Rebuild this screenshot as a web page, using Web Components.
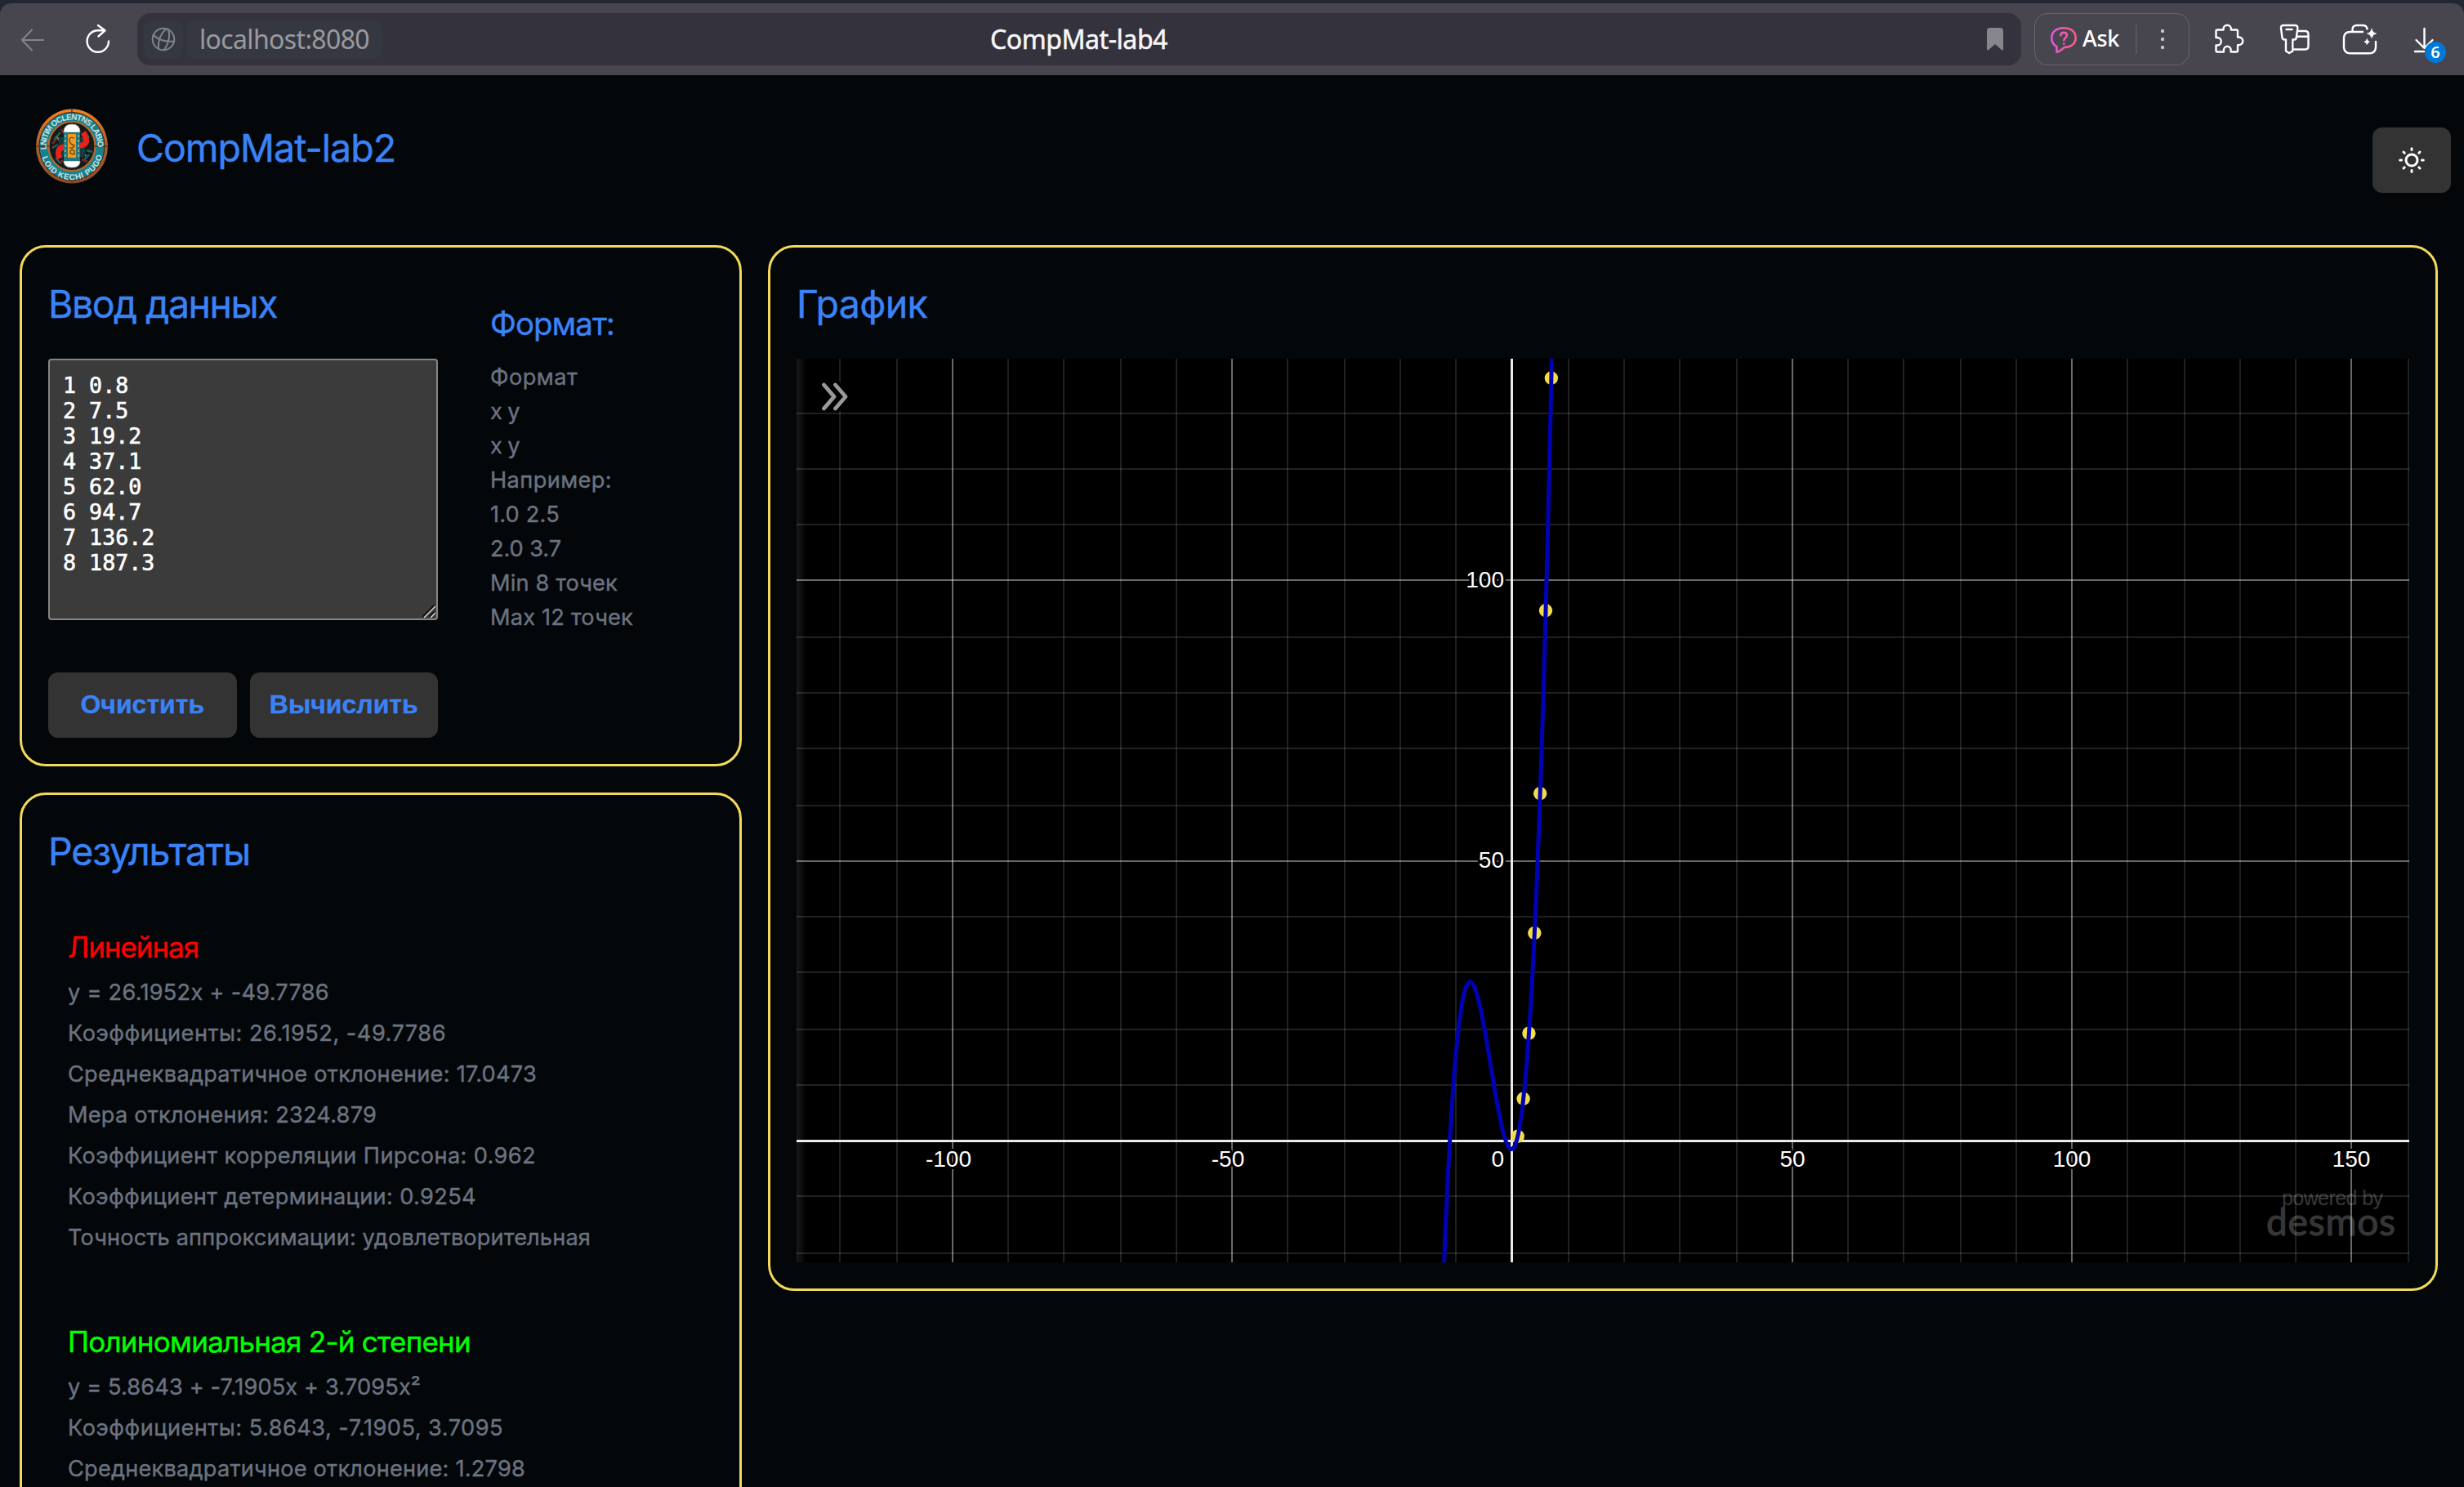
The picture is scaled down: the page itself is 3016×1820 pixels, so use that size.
<!DOCTYPE html>
<html lang="ru">
<head>
<meta charset="utf-8">
<title>CompMat-lab4</title>
<style>
html,body{margin:0;height:100%;overflow:hidden;background:#030709}
body{font-family:Inter,"Noto Sans",sans-serif;color:#6b7280}
</style>
</head>
<body>
<lab-app></lab-app>
<script>
function define(name, html, setup) {
  const tpl = document.createElement('template');
  tpl.innerHTML = html;
  customElements.define(name, class extends HTMLElement {
    constructor() { super(); this.attachShadow({ mode: 'open' }).append(tpl.content.cloneNode(true)); }
    connectedCallback() { if (setup) setup(this, this.shadowRoot); }
  });
}

/* single line of text tracked to a given advance width */
define('fit-text', `<style>:host{display:block;white-space:nowrap}span{display:inline-block}</style><span><slot></slot></span>`, (el, root) => {
  const span = root.querySelector('span');
  const w = +el.getAttribute('w'), n = el.textContent.length;
  if (w) span.style.letterSpacing = ((w - span.getBoundingClientRect().width) / n) + 'px';
});

define('ask-button', `<style>
:host{display:flex;box-sizing:border-box;width:190px;height:64px;border:1.5px solid #66656e;border-radius:16px;align-items:center;color:#fff;padding-left:18px}
svg{display:block;flex:none}
.t{font:500 27px/64px "Noto Sans",sans-serif;margin:-3px 0 0 6px;width:65px}
i{width:2px;height:36px;background:#57565f;margin-right:28px}
</style>
<svg width="34" height="36" viewBox="0 0 34 36" fill="none" stroke="url(#g)" stroke-width="2.6" stroke-linejoin="round" stroke-linecap="round">
<defs><linearGradient id="g" gradientUnits="userSpaceOnUse" x1="0" y1="18" x2="34" y2="18"><stop offset="0" stop-color="#df56e0"/><stop offset="1" stop-color="#ff5c80"/></linearGradient></defs>
<path d="M8.5 27.2C4.500 25 2.300 21 2.300 16.500C2.300 9 8 4.300 17 4.300S31.700 9 31.700 16.200S26 27.800 18.500 27.800C15.500 29.200 12.500 33.500 8.500 33.600Z"/>
<path d="M13.300 13.200C13.500 8.800 20.900 8.800 20.900 13.300C20.900 16.300 17.300 16.300 17.300 19.300M17.300 23.600v.2"/></svg>
<fit-text class="t" w="45">Ask</fit-text><i></i>
<svg width="6" height="28" fill="#c6c6ca"><circle cx="3" cy="4" r="2.200"/><circle cx="3" cy="14" r="2.200"/><circle cx="3" cy="24" r="2.200"/></svg>`);

define('browser-bar', `<style>
:host{display:block;height:92px;background:#232531;padding-top:4px;box-sizing:border-box}
.bar{display:flex;align-items:center;height:88px;background:#47464f;border-radius:14px 14px 0 0;padding-left:24px;box-sizing:border-box}
svg{display:block;flex:none;fill:none;stroke:#fff;stroke-width:2.400;stroke-linecap:round;stroke-linejoin:round}
.reload{margin-left:48px}
.url{margin-left:32px;width:2306px;height:64px;background:#34333d;border-radius:16px;display:flex;align-items:center;box-sizing:border-box;padding:0 22px 0 8px;font:32px/48px "Noto Sans",sans-serif}
.chip{height:48px;background:#363841;border-radius:12px;display:flex;align-items:center;justify-content:center}
.globe{width:48px}.host{width:240px;margin-left:4px;color:#9a9a9e}
.title{margin-left:744px;width:1220px;color:#f7f7f8;-webkit-text-stroke:.5px}
ask-button{margin-left:16px}
.puzzle{margin-left:30px}.key{margin-left:42px}.case{margin-left:36px}
.dl{position:relative;margin-left:43px}
.badge{position:absolute;left:15px;top:20px;width:26px;height:26px;border-radius:50%;background:#0078d7;color:#fff;font:600 20px/25px "Noto Sans",sans-serif;text-align:center}
</style>
<div class="bar">
<svg width="32" height="32" viewBox="0 0 32 32" style="stroke:#85848b;stroke-width:2"><path d="M29 17H3M15 4.500L3 17L15 29.500"/></svg>
<svg class="reload" width="32" height="40" viewBox="0 0 32 40" style="stroke-width:2.400"><path d="M29 22.500A13.200 13.200 0 1 1 15.800 9.300H24M16 3L24.500 9.300L16.500 16.500"/></svg>
<div class="url">
<div class="chip globe"><svg width="30" height="30" viewBox="0 0 30 30" style="stroke:#80838b;stroke-width:2"><circle cx="15" cy="15" r="13.300"/><path d="M18.500 2.200C12.500 7 8.500 16 8.800 26.500M20.500 2.800C24 9.500 21.500 20.500 16 28.200M2.500 9.500C8 15.500 18 19 28.200 17.500"/></svg></div>
<div class="chip host"><fit-text w="208">localhost:8080</fit-text></div>
<fit-text class="title" w="217">CompMat-lab4</fit-text>
<svg width="20" height="28" viewBox="0 0 20 28" style="fill:#87868c;stroke:none"><path d="M0 4Q0 0 4 0H16Q20 0 20 4V27L18.500 27.500L10 20L1.500 27.500L0 27Z"/></svg>
</div>
<ask-button></ask-button>
<svg class="puzzle" width="38" height="40" viewBox="0 0 38 40"><path d="M2.500 10Q2.500 8.500 4 8.500H11.500V7.500A4.700 4.800 0 0 1 20.900 7.500V8.500H27.500Q29 8.500 29 10V17.500H30.500A4.800 4.800 0 0 1 30.500 27.100H29V34Q29 35.500 27.500 35.500H20.700V33.500A4.400 4.800 0 0 0 11.900 33.500V35.500H4Q2.500 35.500 2.500 34V27.500H4A4.700 4.700 0 0 0 4 18H2.500Z"/></svg>
<svg class="key" width="40" height="40" viewBox="0 0 40 40"><path d="M5 3H19Q22.600 3 22.300 6.500L20.800 18Q20.500 20.500 18 20.500H16.300V34.500L12 37L8 34.500V20.500H6.500Q4 20.500 3.500 18L2 6.500Q1.700 3 5 3ZM8.500 8H15.500M22 10H31.500Q35.500 10 35.500 14V28.500Q35.500 32.500 31.500 32.500H16.500M21.600 16.800H35"/></svg>
<svg class="case" width="44" height="40" viewBox="0 0 44 40"><path d="M26 11H11Q3 11 3 19V29.500Q3 37.300 11 37.300H34Q42 37.300 42 29.500V23M13.500 10.500V8Q13.500 3 18.500 3H26Q31 3 31.500 7.500"/><path d="M37 7.500Q38 12.200 42.500 13Q38 13.800 37 18.500Q36 13.800 31.500 13Q36 12.200 37 7.500ZM31.200 20Q31.800 22.700 34.400 23.200Q31.800 23.800 31.200 26.500Q30.600 23.800 28 23.200Q30.600 22.700 31.200 20Z" style="fill:#fff;stroke-width:.8"/></svg>
<div class="dl"><svg width="32" height="34" viewBox="0 0 32 34"><path d="M14.500 4V27.500M4.500 18L14.500 28L24.500 18M3 32H14"/></svg><div class="badge">6</div></div>
</div>`);

define('lab-logo', `<style>:host{display:block}svg{display:block}text{font:700 10px "Liberation Sans",sans-serif;fill:#cfe0df}</style>
<svg width="90" height="92" viewBox="-45 -46 90 92">
<defs><linearGradient id="r" x1="0" y1="0" x2="0" y2="1"><stop offset="0" stop-color="#f58120"/><stop offset=".45" stop-color="#b1622c"/><stop offset="1" stop-color="#8c4a28"/></linearGradient>
<path id="up" d="M-30.500 8A31.500 32.500 0 1 1 30.500 8"/><path id="dn" d="M-38 8A38.500 39.500 0 0 0 38 8"/></defs>
<ellipse rx="44" ry="45.500" fill="url(#r)"/><ellipse rx="40" ry="41.500" fill="#17828f" stroke="#2a2320" stroke-width="1"/>
<ellipse rx="28.500" ry="30" fill="#171a1b" stroke="#bb672a" stroke-width="2.200"/>
<g stroke-width="2.500" fill="none"><path stroke="#1e625f" d="M-22-8l8-9M-20 14l6 7M16-17l5 7M14 18l7-8M-24 2l7-4M18 5l7 2"/><path stroke="#79242a" d="M-13-21l4 6M-24-3l5-6M12 16l7 3M-15 21l4-4"/><path stroke="#6c7355" d="M-19-12l9 11M17 12l-6-7M20-4l-5-7"/></g>
<path d="M-16-11H16V13H-16Z" fill="#153c3d"/>
<path d="M-15 15Q-20 1-8 1" fill="none" stroke="#e5231c" stroke-width="7"/><path d="M14-17Q23-1 9-1" fill="none" stroke="#e5231c" stroke-width="7"/>
<path d="M-10-17Q-10-27 0-27T10-17ZM-10 18Q-10 26 0 26T10 18Z" fill="#fff" stroke="#aeb5b5"/>
<rect x="-10" y="-17" width="20" height="35" fill="#23777a"/><path d="M-8-14V16M8-14V16" stroke="#75aa94" stroke-width="2" stroke-dasharray="3 3"/>
<rect x="-5" y="-15" width="10" height="29" fill="#f39b1f"/><path d="M3-10Q-4-12-3-7T3-1Q2 3-3 2M3 5Q-3 3-2 9L3 10V5" fill="none" stroke="#5c451d" stroke-width="1.300"/>
<path d="M-44 0H-28M28 0H44M0-45V-40M0 40V45" stroke="#503522" stroke-width="1.400"/>
<text><textPath href="#up" textLength="106" startOffset="4">LNITIM OCLENTNS LABIO</textPath></text>
<text><textPath href="#dn" textLength="100" startOffset="6">LOID KECHI PUGO</textPath></text>
</svg>`);

define('page-header', `<style>
:host{display:flex;height:208px;box-sizing:border-box;padding:41px 16px 0 43px;align-items:flex-start}
fit-text{font-size:46.500px;line-height:56px;color:#3b82f6;margin:20px 0 0 34px;flex:1}
button{margin:23px 0 0;width:96px;height:80px;border:0;border-radius:12px;background:#333;padding:0;display:flex;align-items:center;justify-content:center}
svg{fill:none;stroke:#fff;stroke-width:3;stroke-linecap:round}
</style><lab-logo></lab-logo><fit-text w="317">CompMat-lab2</fit-text>
<button><svg width="40" height="40" viewBox="-20 -20 40 40"><circle r="7"/><path d="M0-14.300V-12.500M0 12.500V14.300M-14.300 0H-12.500M12.500 0H14.300M-10-10L-8.800-8.800M10 10L8.800 8.800M-10 10L-8.800 8.800M10-10L8.800-8.800"/></svg></button>`);

define('lab-card', `<style>
:host{display:block;box-sizing:border-box;border:3px solid #f3d95b;border-radius:32px;padding:41px 32px 0}
fit-text{font-size:46.500px;line-height:56px;height:56px;color:#3b82f6}
</style><fit-text></fit-text><slot></slot>`, (el, root) => {
  const f = root.querySelector('fit-text');
  const n = document.createElement('fit-text');
  n.setAttribute('w', el.getAttribute('tw'));
  n.textContent = el.getAttribute('heading');
  f.replaceWith(n);
});

define('lab-button', `<style>:host{display:block;flex:1}button{display:flex;align-items:center;justify-content:center;width:100%;height:80px;border:0;border-radius:12px;background:#333;color:#3b82f6;font:700 32px "Liberation Sans",Arial,sans-serif;padding:0 0 2px}</style><button><slot></slot></button>`);

define('data-input', `<style>
:host{display:flex;margin-top:-56px}
.l{width:477px;padding-top:95px}
textarea{display:block;box-sizing:border-box;width:477px;height:320px;border:2px solid #858585;border-radius:4px;background:#3b3b3b;color:#fff;padding:15px 16px;margin:0;font:26.670px/31px "DejaVu Sans Mono",monospace;overflow:hidden;resize:none;-webkit-text-stroke:.6px}
.box{position:relative}
.box svg{position:absolute;right:2px;bottom:2px}
.btns{display:flex;gap:16px;margin-top:64px}
.r{margin-left:64px;padding-top:24px;font-size:27.200px;line-height:42px}
.h{font-size:38.500px;line-height:56px;color:#3b82f6;margin-bottom:17px}
</style>
<div class="l"><div class="box"><textarea spellcheck="false">1 0.8
2 7.5
3 19.2
4 37.1
5 62.0
6 94.7
7 136.2
8 187.3</textarea><svg width="18" height="18"><path d="M2 16L16 2M10 16L16 10" stroke="#111" stroke-width="3"/><path d="M3 17L17 3M11 17L17 11" stroke="#ddd" stroke-width="1.500"/></svg></div>
<div class="btns"><lab-button>Очистить</lab-button><lab-button>Вычислить</lab-button></div></div>
<div class="r"><fit-text class="h" w="152">Формат:</fit-text>
<fit-text w="107">Формат</fit-text><fit-text w="36">x y</fit-text><fit-text w="36">x y</fit-text><fit-text w="149">Например:</fit-text><fit-text w="85">1.0 2.5</fit-text><fit-text w="87">2.0 3.7</fit-text><fit-text w="156">Min 8 точек</fit-text><fit-text w="175">Max 12 точек</fit-text></div>`);

define('fit-result', `<style>
:host{display:block;padding-left:24px;margin-bottom:72px;font-size:27.200px;line-height:50px}
::slotted(.name){font-size:35px;line-height:61px;color:var(--accent)}
</style><slot></slot>`);

define('graph-view', `<style>:host{display:block;margin-top:39px;-webkit-text-stroke:0}svg{display:block}
.lb{font:28px "Liberation Sans",Arial,sans-serif;fill:#fff;stroke:#000;stroke-width:6px;paint-order:stroke;stroke-linejoin:round}
.wm{font-family:"Liberation Sans",Arial,sans-serif;font-size:25px;fill:#fff}
.lg{font-family:Lato,sans-serif;font-size:46px;fill:#fff;stroke:#fff;stroke-width:1px;stroke-linejoin:round}
</style><svg width="1974" height="1106" viewBox="975 439 1974 1106"></svg>`, (el, root) => {
  const ox = 1850.9, oy = 1396.2, s = 6.853, even = v => 2 * Math.round(v / 2);
  const X = v => ox + s * v, Y = v => oy - s * v;
  const pts = [[1, .8], [2, 7.5], [3, 19.2], [4, 37.1], [5, 62], [6, 94.7], [7, 136.2], [8, 187.3]];
  /* cubic least squares via normal equations */
  const A = [0, 1, 2, 3].map(i => [0, 1, 2, 3].map(j => pts.reduce((a, p) => a + p[0] ** (i + j), 0)).concat(pts.reduce((a, p) => a + p[1] * p[0] ** i, 0)));
  for (let i = 0; i < 4; i++) for (let j = 0; j < 4; j++) if (j !== i) {
    const f = A[j][i] / A[i][i];
    for (let k = i; k < 5; k++) A[j][k] -= f * A[i][k];
  }
  const c = A.map((r, i) => r[4] / r[i]);
  let h = '<rect x="975" y="439" width="1974" height="1106" fill="#000"/>';
  for (let v = -120; v <= 160; v += 10) if (v) h += `<path d="M${even(X(v))} 439V1545" stroke="#fff" stroke-opacity="${v % 50 ? .125 : .41}" stroke-width="2"/>`;
  for (let v = -20; v <= 130; v += 10) if (v) h += `<path d="M975 ${even(Y(v))}H2949" stroke="#fff" stroke-opacity="${v % 50 ? .125 : .41}" stroke-width="2"/>`;
  h += '<path d="M1850.500 439V1545M975 1396.500H2949" stroke="#ebe9ea" stroke-width="3"/>';
  h += '<defs><linearGradient id="e"><stop stop-color="#fff" stop-opacity=".1"/><stop offset="1" stop-color="#fff" stop-opacity="0"/></linearGradient></defs><rect x="975" y="439" width="12" height="1106" fill="url(#e)"/>';
  for (const [x, y] of pts) h += `<circle cx="${X(x)}" cy="${Y(y)}" r="8.200" fill="#f3dc47"/>`;
  let d = '';
  for (let x = -13; x <= 8; x += .1) d += (d ? 'L' : 'M') + X(x).toFixed(2) + ' ' + Y(c[0] + c[1] * x + c[2] * x * x + c[3] * x ** 3).toFixed(2);
  h += `<path d="${d}" fill="none" stroke="#0000b4" stroke-width="5" stroke-linejoin="round"/>`;
  for (const v of [-100, -50, 50, 100, 150]) h += `<text class="lb" text-anchor="middle" x="${even(X(v)) - (v < 0 ? 5 : 0)}" y="1428">${v}</text>`;
  h += '<text class="lb" text-anchor="end" x="1841" y="1428">0</text><text class="lb" text-anchor="end" x="1841" y="1062">50</text><text class="lb" text-anchor="end" x="1841" y="719">100</text>';
  h += '<g opacity=".21"><text class="wm" x="2793" y="1475" textLength="124">powered by</text><text class="lg" x="2774" y="1512" textLength="158">desmos</text></g>';
  h += '<path d="M1008.500 471L1021 485.500L1008.500 500M1022.500 471L1035 485.500L1022.500 500" fill="none" stroke="#000" stroke-width="12"/><path d="M1008.500 471L1021 485.500L1008.500 500M1022.500 471L1035 485.500L1022.500 500" fill="none" stroke="#999" stroke-width="4.800" stroke-linecap="round" stroke-linejoin="round"/>';
  root.querySelector('svg').innerHTML = h;
});

define('lab-app', `<style>
:host{display:block;height:1820px;overflow:hidden;background:#030709}
main{display:flex;gap:32px;padding:0 32px 0 24px;align-items:flex-start}
page-header,main{-webkit-text-stroke:.4px}
.side{width:884px;display:flex;flex-direction:column;gap:32px}
.in{height:638px}.res{height:1300px}.graph{flex:1;height:1280px}
.list{padding-top:59px}
</style>
<browser-bar></browser-bar><page-header></page-header>
<main><div class="side">
<lab-card class="in" heading="Ввод данных" tw="280"><data-input></data-input></lab-card>
<lab-card class="res" heading="Результаты" tw="247"><div class="list">
<fit-result style="--accent:#f00"><fit-text class="name" w="160">Линейная</fit-text>
<fit-text w="320">y = 26.1952x + -49.7786</fit-text><fit-text w="463">Коэффициенты: 26.1952, -49.7786</fit-text><fit-text w="574">Среднеквадратичное отклонение: 17.0473</fit-text><fit-text w="378">Мера отклонения: 2324.879</fit-text><fit-text w="573">Коэффициент корреляции Пирсона: 0.962</fit-text><fit-text w="500">Коэффициент детерминации: 0.9254</fit-text><fit-text w="640">Точность аппроксимации: удовлетворительная</fit-text></fit-result>
<fit-result style="--accent:#0f0"><fit-text class="name" w="493">Полиномиальная 2-й степени</fit-text>
<fit-text w="432">y = 5.8643 + -7.1905x + 3.7095x²</fit-text><fit-text w="533">Коэффициенты: 5.8643, -7.1905, 3.7095</fit-text><fit-text w="560">Среднеквадратичное отклонение: 1.2798</fit-text></fit-result>
</div></lab-card></div>
<lab-card class="graph" heading="График" tw="160"><graph-view></graph-view></lab-card>
</main>`);
</script>
</body>
</html>
